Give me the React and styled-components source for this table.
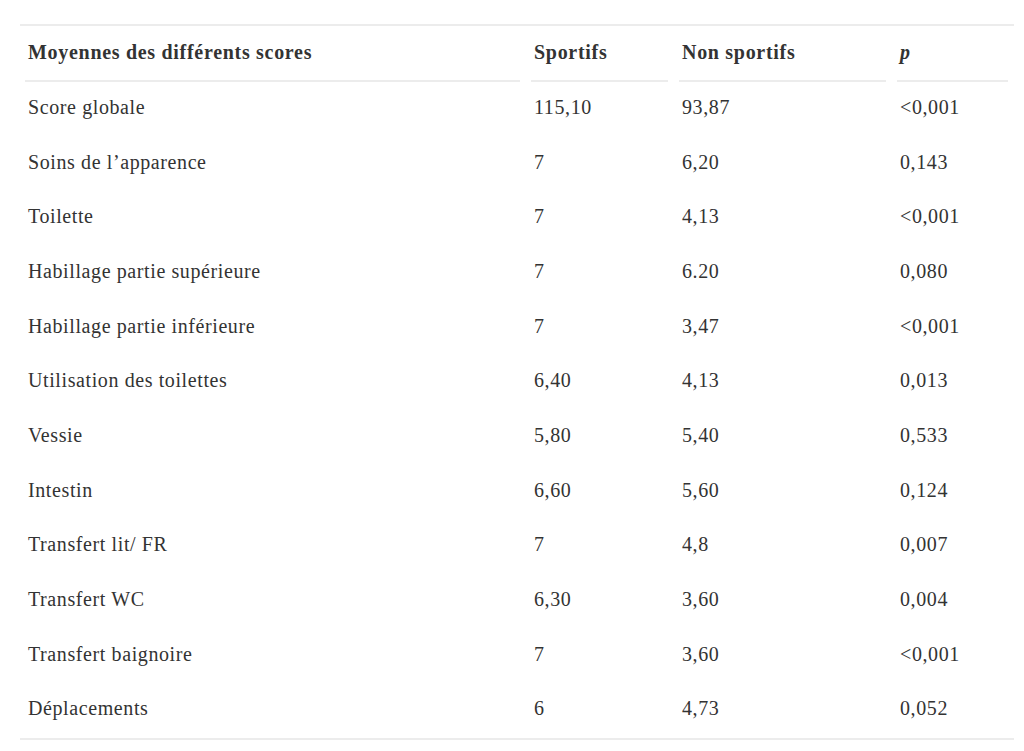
import React from "react";
import styled, { createGlobalStyle } from "styled-components";

const rows = [
  ["Score globale", "115,10", "93,87", "<0,001"],
  ["Soins de l’apparence", "7", "6,20", "0,143"],
  ["Toilette", "7", "4,13", "<0,001"],
  ["Habillage partie supérieure", "7", "6.20", "0,080"],
  ["Habillage partie inférieure", "7", "3,47", "<0,001"],
  ["Utilisation des toilettes", "6,40", "4,13", "0,013"],
  ["Vessie", "5,80", "5,40", "0,533"],
  ["Intestin", "6,60", "5,60", "0,124"],
  ["Transfert lit/ FR", "7", "4,8", "0,007"],
  ["Transfert WC", "6,30", "3,60", "0,004"],
  ["Transfert baignoire", "7", "3,60", "<0,001"],
  ["Déplacements", "6", "4,73", "0,052"],
];

const widths = [506, 148, 218, 122];

const Global = createGlobalStyle`
  body {
    margin: 0;
    background: #fff;
  }
`;

const Table = styled.table`
  width: 994px;
  margin: 24px 0 0 20px;
  border-collapse: collapse;
  table-layout: fixed;
  border-top: 2px solid #ececec;
  border-bottom: 2px solid #ececec;
  font-family: "Liberation Serif", "DejaVu Serif", serif;
  font-size: 20px;
  letter-spacing: 0.6px;
  color: #333;
`;

const Col = styled.col`
  width: ${(p) => p.$w}px;
`;

const Th = styled.th`
  padding: 0;
  text-align: left;
  vertical-align: top;
  font-weight: 700;
  letter-spacing: 0.7px;
`;

const HeadInner = styled.div`
  display: flex;
  align-items: center;
  height: 52px;
  margin: 0 6px 0 5px;
  padding: 0 0 2px 3px;
  border-bottom: 2px solid #ececec;
  font-style: ${(p) => (p.$italic ? "italic" : "normal")};
`;

const Td = styled.td`
  padding: 13px 6px 17.67px 8px;
  line-height: 24px;
  vertical-align: middle;
  white-space: nowrap;
`;

const App = () => {
  return (
    <>
      <Global />
      <Table>
        <colgroup>
          {widths.map((w, i) => (
            <Col key={i} $w={w} />
          ))}
        </colgroup>
        <thead>
          <tr>
            <Th>
              <HeadInner>Moyennes des différents scores</HeadInner>
            </Th>
            <Th>
              <HeadInner>Sportifs</HeadInner>
            </Th>
            <Th>
              <HeadInner>Non sportifs</HeadInner>
            </Th>
            <Th>
              <HeadInner $italic>p</HeadInner>
            </Th>
          </tr>
        </thead>
        <tbody>
          {rows.map((r) => (
            <tr key={r[0]}>
              {r.map((c, i) => (
                <Td key={i}>{c}</Td>
              ))}
            </tr>
          ))}
        </tbody>
      </Table>
    </>
  );
};

export default App;
